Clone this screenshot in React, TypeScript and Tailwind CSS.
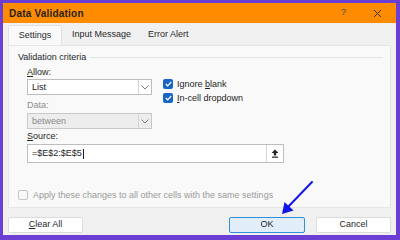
import React from 'react';

const ui = { fontFamily: '"Liberation Sans", Arial, sans-serif' };

function Chevron() {
  return (
    <svg width="8" height="5" viewBox="0 0 8 5" fill="none">
      <path d="M0.5 0.5 L4 4 L7.5 0.5" stroke="#6b6b6b" strokeWidth="0.9" />
    </svg>
  );
}

function Check() {
  return (
    <span className="flex h-[10px] w-[10px] items-center justify-center rounded-[2px] bg-[#1763c6]">
      <svg width="7" height="6" viewBox="0 0 7 6" fill="none">
        <path d="M0.8 3 L2.7 4.8 L6.2 1" stroke="white" strokeWidth="1.2" />
      </svg>
    </span>
  );
}

function Select({ value, disabled }: { value: string; disabled?: boolean }) {
  return (
    <div
      className={`flex h-[16px] w-[125px] items-stretch border ${
        disabled ? 'border-[#c9c9c9] bg-[#ededed] text-[#8a8a8a]' : 'border-[#bdbdbd] bg-white text-[#202020]'
      }`}
    >
      <span className="flex flex-1 items-center pl-[4px] text-[9px] leading-none">{value}</span>
      <span className="flex w-[13px] items-center justify-center border-l border-[#d6d6d6]">
        <Chevron />
      </span>
    </div>
  );
}

export default function App() {
  return (
    <div
      className="relative flex h-[240px] w-[400px] flex-col bg-[#6b3fd4] pb-[5px] pl-[3px] pr-[4px] pt-[3px]"
      style={ui}
    >
      {/* title bar */}
      <div className="flex h-[20px] items-center bg-[#ff8c00] pl-[6px] pr-[14px]">
        <span className="text-[10px] font-bold tracking-[0.2px] text-[#1f1f1f]">Data Validation</span>
        <span className="ml-auto mr-[27px] text-[9px] text-[#444]">?</span>
        <svg width="9" height="9" viewBox="0 0 9 9">
          <path d="M1 1 L8 8 M8 1 L1 8" stroke="#333" strokeWidth="1" />
        </svg>
      </div>

      {/* body */}
      <div className="flex flex-1 flex-col bg-[#f0f0f0] px-[5px]">
        <div className="flex h-[22px] items-end text-[9px] text-[#2a2a2a]">
          <span className="flex h-[20px] w-[54px] items-center justify-center rounded-t-[2px] border border-b-0 border-[#e2e2e2] bg-[#f9f9f9]">
            Settings
          </span>
          <span className="flex h-[20px] items-center pl-[10px] pr-[9px]">Input Message</span>
          <span className="flex h-[20px] items-center px-[8px]">Error Alert</span>
        </div>

        <div className="flex h-[163px] flex-col border border-[#e6e6e6] bg-[#f9f9f9] pl-[9px] pr-[7px] text-[9px] text-[#262626]">
          <div className="mt-[5px] flex items-center gap-[4px] leading-[12px]">
            <span>Validation criteria</span>
            <span className="h-px flex-1 bg-[#e3e3e3]" />
          </div>

          <div className="flex pl-[9px]">
            <div className="flex flex-col">
              <span className="mt-[3px] leading-[12px]">
                <u>A</u>llow:
              </span>
              <div className="mt-[1px]">
                <Select value="List" />
              </div>
              <span className="mt-[4px] leading-[12px] text-[#8d8d8d]">Data:</span>
              <div className="mt-[2px]">
                <Select value="between" disabled />
              </div>
            </div>
            <div className="ml-[11px] mt-[16px] flex flex-col gap-[4px]">
              <label className="flex items-center gap-[4px] leading-[10px]">
                <Check />
                <span>
                  Ignore <u>b</u>lank
                </span>
              </label>
              <label className="flex items-center gap-[4px] leading-[10px]">
                <Check />
                <span>
                  <u>I</u>n-cell dropdown
                </span>
              </label>
            </div>
          </div>

          <div className="flex flex-col pl-[9px]">
            <span className="mt-[1px] leading-[12px]">
              <u>S</u>ource:
            </span>
            <div className="mt-[2px] flex h-[19px] w-[257px] items-stretch border border-[#bdbdbd] bg-white">
              <span className="flex flex-1 items-center pl-[4px] text-[9px] leading-none">
                =$E$2:$E$5<span className="ml-px inline-block h-[10px] w-px bg-[#202020]" />
              </span>
              <span className="flex w-[17px] items-center justify-center border-l border-[#d6d6d6]">
                <svg width="8" height="9" viewBox="0 0 8 9">
                  <path d="M4 0.5 L7.5 4 L5.2 4 L5.2 6.5 L2.8 6.5 L2.8 4 L0.5 4 Z" fill="#222" />
                  <rect x="1" y="7.6" width="6" height="1.2" fill="#222" />
                </svg>
              </span>
            </div>
          </div>

          <div className="mt-auto mb-[6px] flex items-center gap-[5px] text-[#9a9a9a]">
            <span className="h-[10px] w-[10px] rounded-[2px] border border-[#c4c4c4] bg-[#f9f9f9]" />
            <span className="leading-[12px]">Apply these changes to all other cells with the same settings</span>
          </div>
        </div>

        <div className="mt-[9px] flex items-center text-[9px] text-[#1f1f1f]">
          <span className="flex h-[16px] w-[75px] items-center justify-center rounded-[2px] border border-[#dcdcdc] bg-white">
            <span>
              <u>C</u>lear All
            </span>
          </span>
          <span className="ml-auto flex h-[16px] w-[76px] items-center justify-center rounded-[2px] border border-[#2f8fd8] bg-[#e1eefa]">
            OK
          </span>
          <span className="ml-[11px] flex h-[16px] w-[75px] items-center justify-center rounded-[2px] border border-[#dcdcdc] bg-white">
            Cancel
          </span>
        </div>
      </div>

      {/* annotation arrow */}
      <svg className="pointer-events-none absolute left-[278px] top-[178px]" width="40" height="40" viewBox="0 0 40 40">
        <path d="M34 4 L9 30" stroke="#1414e6" strokeWidth="2" strokeLinecap="round" />
        <path d="M4 36 L6.5 24 L15.5 32.5 Z" fill="#1414e6" />
      </svg>
    </div>
  );
}
